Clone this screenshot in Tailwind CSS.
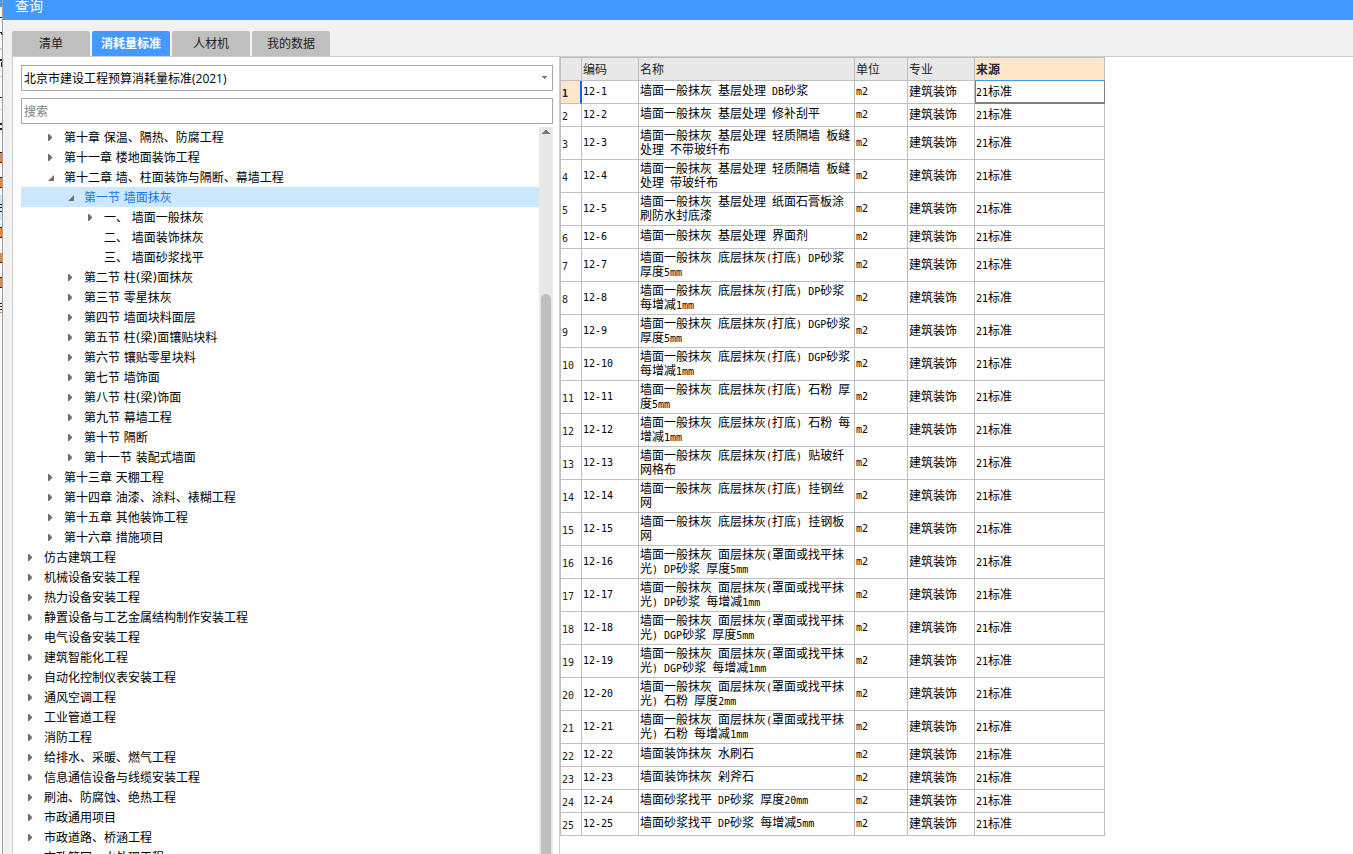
<!DOCTYPE html>
<html lang="zh-CN">
<head>
<meta charset="utf-8">
<title>查询</title>
<script src="https://cdn.jsdelivr.net/npm/@tailwindcss/browser@4"></script>
</head>
<body class="h-screen overflow-hidden flex bg-white text-black text-xs font-['DejaVu_Sans','Noto_Sans_CJK_SC',sans-serif]">
<div class="w-[3px] shrink-0 border-r border-[#a0a0a0] bg-[#f8f8f8] overflow-hidden">
  <!-- sliver of the window behind the dialog -->
  <svg width="2" height="330" shape-rendering="crispEdges">
    <path fill="#4499ff" d="M0 0h2v7h-2z"/>
    <path fill="#cce8ff" d="M0 195h2v25h-2z"/>
    <path fill="#e08a3c" d="M0 153h2v9h-2zM0 178h2v9h-2zM0 228h2v9h-2zM0 253h2v9h-2zM0 278h2v9h-2zM0 312h2v1h-2z"/>
    <path fill="#222" d="M0 17h2v1h-2zM0 32h2v1h-2zM1 33h1v2h-1zM0 59h2v2h-2zM1 62h1v5h-1zM0 97h2v1h-2zM0 123h2v2h-2zM0 128h2v2h-2zM0 152h2v1h-2zM0 162h2v1h-2zM0 177h2v1h-2zM0 187h2v1h-2zM0 204h2v1h-2zM0 207h2v1h-2zM0 211h2v1h-2zM0 227h2v1h-2zM0 237h2v1h-2zM0 262h2v1h-2zM0 277h2v1h-2zM0 287h2v1h-2zM0 303h2v1h-2zM0 306h2v1h-2zM0 309h2v1h-2z"/>
    <path fill="#d4d4d4" d="M0 48h2v2h-2zM0 76h2v1h-2zM0 109h2v1h-2z"/>
  </svg>
</div>
<div class="flex-1 min-w-0 flex flex-col bg-[#f1f1f1]">
  <header class="h-5 shrink-0 bg-[#4499ff] text-white pl-3"><h1 class="text-sm leading-3">查询</h1></header>
  <nav class="flex gap-0.5 pl-[9px] pt-[11px] text-[#222]">
    <button class="w-[78px] h-[25px] rounded-t-xs bg-[#bfbfbf]">清单</button>
    <button class="w-[78px] h-[25px] rounded-t-xs bg-[#4499ff] text-white font-bold">消耗量标准</button>
    <button class="w-[78px] h-[25px] rounded-t-xs bg-[#bfbfbf]">人材机</button>
    <button class="w-[78px] h-[25px] rounded-t-xs bg-[#bfbfbf]">我的数据</button>
  </nav>
  <main class="flex-1 min-h-0 ml-[9px] flex border-t border-l border-[#cccccc] bg-white">
    <section class="w-[547px] shrink-0 flex flex-col pl-2 pt-2 pr-[6px] border-r border-[#cccccc]">
      <div class="relative">
        <select aria-label="标准" class="appearance-none block w-full h-[26px] border border-[#a8a8a8] bg-white pl-[2px] pt-0.5 font-['Open_Sans','Noto_Sans_CJK_SC',sans-serif]"><option>北京市建设工程预算消耗量标准(2021)</option></select>
        <svg class="absolute right-1.5 top-[11px] pointer-events-none" width="5" height="3" fill="#777"><path d="M0 0h5v1h-1v1h-1v1h-1v-1h-1v-1h-1z"/></svg>
      </div>
      <input aria-label="搜索" placeholder="搜索" class="mt-[7px] block w-full h-[26px] shrink-0 border border-[#a8a8a8] pl-[2px] pt-0.5 placeholder:text-[#808080]">
      <div class="mt-[3px] flex-1 min-h-0 flex overflow-hidden">
        <ul id="tree" role="tree" class="flex-1 min-w-0"></ul>
        <div class="w-[14px] shrink-0 bg-[#e8e8e8] flex flex-col items-center pt-[3px]">
          <svg width="9" height="4" fill="#777" shape-rendering="crispEdges"><path d="M3 0h2v1h1v1h1v1h1v1h-8v-1h1v-1h1v-1h1z"/></svg>
          <div class="mt-40 w-[10px] flex-1 rounded-t-full bg-[#bfbfbf]"></div>
        </div>
      </div>
    </section>
    <section class="flex-1 min-w-0">
      <table class="table-fixed border-separate border-spacing-0 border-t border-l border-[#bfbfbf] w-[545px] leading-[14px]">
        <colgroup><col class="w-[21px]"><col class="w-[57px]"><col class="w-[216px]"><col class="w-[53px]"><col class="w-[67px]"><col></colgroup>
        <thead>
          <tr class="h-[23px] text-left text-[#222] bg-[#e8e8e8]">
            <th class="border-r border-b border-[#bfbfbf]"></th>
            <th class="border-r border-b border-[#bfbfbf] pl-px pt-0.5 font-normal">编码</th>
            <th class="border-r border-b border-[#bfbfbf] pl-px pt-0.5 font-normal">名称</th>
            <th class="border-r border-b border-[#bfbfbf] pl-px pt-0.5 font-normal">单位</th>
            <th class="border-r border-b border-[#bfbfbf] pl-px pt-0.5 font-normal">专业</th>
            <th class="border-r border-b border-r-[#bfbfbf] border-b-[#4499ff] pl-px pt-0.5 font-bold bg-[#ffe6c8]">来源</th>
          </tr>
        </thead>
        <tbody id="rows"></tbody>
      </table>
    </section>
  </main>
</div>
<script>
const indent = ['pl-[7px]', 'pl-[27px]', 'pl-[47px]', 'pl-[67px]'];
const items = [
 [1,'第十章 保温、隔热、防腐工程',1],[1,'第十一章 楼地面装饰工程',1],[1,'第十二章 墙、柱面装饰与隔断、幕墙工程',2],
 [2,'第一节 墙面抹灰',2],[3,'一、 墙面一般抹灰',1],[3,'二、 墙面装饰抹灰',0],[3,'三、 墙面砂浆找平',0],
 [2,'第二节 柱(梁)面抹灰',1],[2,'第三节 零星抹灰',1],[2,'第四节 墙面块料面层',1],[2,'第五节 柱(梁)面镶贴块料',1],
 [2,'第六节 镶贴零星块料',1],[2,'第七节 墙饰面',1],[2,'第八节 柱(梁)饰面',1],[2,'第九节 幕墙工程',1],[2,'第十节 隔断',1],[2,'第十一节 装配式墙面',1],
 [1,'第十三章 天棚工程',1],[1,'第十四章 油漆、涂料、裱糊工程',1],[1,'第十五章 其他装饰工程',1],[1,'第十六章 措施项目',1],
 [0,'仿古建筑工程',1],[0,'机械设备安装工程',1],[0,'热力设备安装工程',1],[0,'静置设备与工艺金属结构制作安装工程',1],[0,'电气设备安装工程',1],
 [0,'建筑智能化工程',1],[0,'自动化控制仪表安装工程',1],[0,'通风空调工程',1],[0,'工业管道工程',1],[0,'消防工程',1],
 [0,'给排水、采暖、燃气工程',1],[0,'信息通信设备与线缆安装工程',1],[0,'刷油、防腐蚀、绝热工程',1],[0,'市政通用项目',1],[0,'市政道路、桥涵工程',1],[0,'市政管网、水处理工程',1]];
const marks = ['', '<path d="M0 0h1l3 3v1l-3 3h-1z"/>', '<path d="M6 1v6h-6z"/>'];
document.getElementById('tree').innerHTML = items.map(([d, t, m]) =>
 `<li role="treeitem" class="h-5 flex items-center whitespace-nowrap ${indent[d]} ${t === '第一节 墙面抹灰' ? 'bg-[#cce8ff] text-[#1a73e8]' : ''}"><svg class="w-4 shrink-0" width="7" height="7" viewBox="0 0 7 7" preserveAspectRatio="xMinYMid meet" fill="#6e6e6e">${marks[m]}</svg><span class="pt-0.5 leading-[18px]">${t}</span></li>`).join('');

const a = '墙面一般抹灰 ';
const names = [a+'基层处理 DB砂浆', a+'基层处理 修补刮平', a+'基层处理 轻质隔墙 板缝|处理 不带玻纤布', a+'基层处理 轻质隔墙 板缝|处理 带玻纤布',
 a+'基层处理 纸面石膏板涂|刷防水封底漆', a+'基层处理 界面剂', a+'底层抹灰(打底) DP砂浆|厚度5mm', a+'底层抹灰(打底) DP砂浆|每增减1mm',
 a+'底层抹灰(打底) DGP砂浆|厚度5mm', a+'底层抹灰(打底) DGP砂浆|每增减1mm', a+'底层抹灰(打底) 石粉 厚|度5mm', a+'底层抹灰(打底) 石粉 每|增减1mm',
 a+'底层抹灰(打底) 贴玻纤|网格布', a+'底层抹灰(打底) 挂钢丝|网', a+'底层抹灰(打底) 挂钢板|网',
 a+'面层抹灰(罩面或找平抹|光) DP砂浆 厚度5mm', a+'面层抹灰(罩面或找平抹|光) DP砂浆 每增减1mm', a+'面层抹灰(罩面或找平抹|光) DGP砂浆 厚度5mm', a+'面层抹灰(罩面或找平抹|光) DGP砂浆 每增减1mm',
 a+'面层抹灰(罩面或找平抹|光) 石粉 厚度2mm', a+'面层抹灰(罩面或找平抹|光) 石粉 每增减1mm',
 '墙面装饰抹灰 水刷石', '墙面装饰抹灰 剁斧石', '墙面砂浆找平 DP砂浆 厚度20mm', '墙面砂浆找平 DP砂浆 每增减5mm'];
// Latin runs and spaces take half the width of a Chinese character
const half = s => s.replace(/[\x20-\x7b]+/g, m => `<span class="text-[10px] leading-3 font-['DejaVu_Sans_Mono',monospace]">${m}</span>`);
const td = 'border-r border-b border-[#bfbfbf] pl-px whitespace-nowrap';
document.getElementById('rows').innerHTML = names.map((n, i) => {
  const first = i === 0;
  const two = n.includes('|');
  return `<tr class="${two ? 'h-[33px]' : 'h-[23px]'}">
  <th class="border-b border-[#bfbfbf] pl-px pt-px text-left whitespace-nowrap text-[#222] ${first ? 'font-bold bg-[#ffe6c8] border-r-2 border-r-[#0066ff]' : 'font-normal border-r'}">${half(String(i + 1))}</th>
  <td class="${td} pb-0.5">${half('12-' + (i + 1))}</td>
  <td class="${td} ${two ? '' : 'pb-0.5'}">${n.split('|').map(half).join('<br>')}</td>
  <td class="${td} pb-0.5">${half('m2')}</td>
  <td class="${td}">建筑装饰</td>
  <td class="${first ? 'border-l border-r border-b-2 border-[#808080]' : td}">${half('21')}标准</td></tr>`;
}).join('');
</script>
</body>
</html>
